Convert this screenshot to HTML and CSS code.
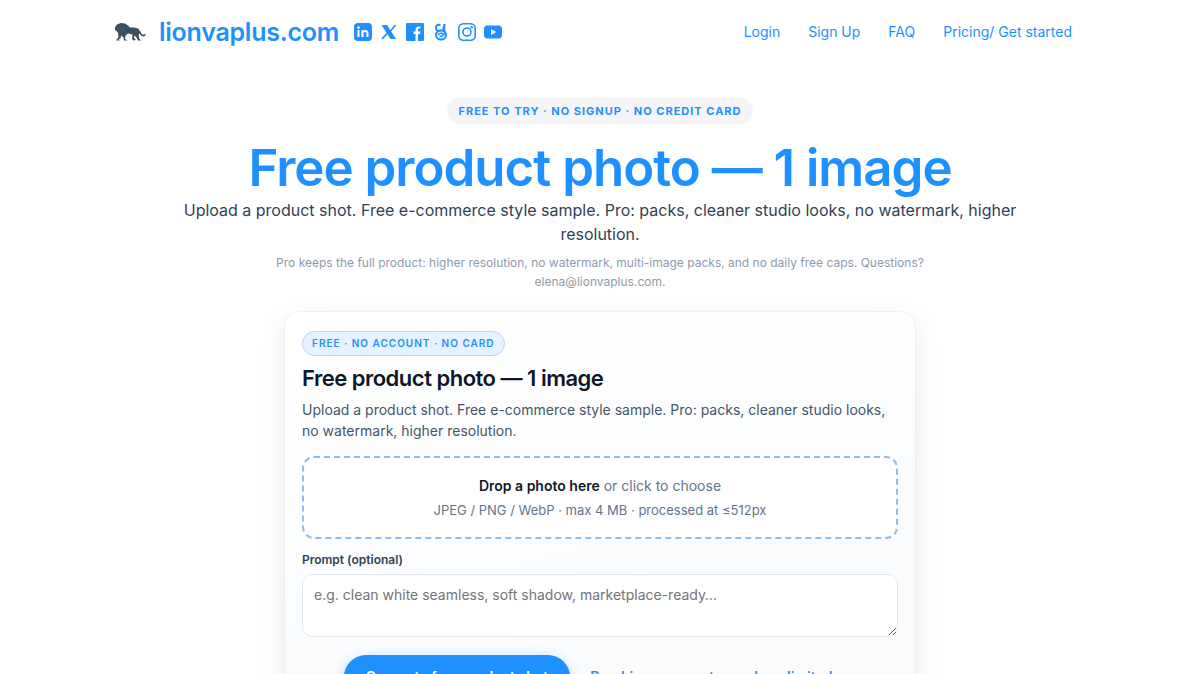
FILE: index.html
```html
<!DOCTYPE html>
<html lang="en">
<head>
<meta charset="utf-8">
<meta name="viewport" content="width=device-width, initial-scale=1">
<title>Free product photo — lionvaplus.com</title>
<link rel="stylesheet" href="styles.css">
</head>
<body>
<header class="header">
  <div class="brand">
    <a class="logo" href="#" aria-label="Home">
      <svg viewBox="0 0 32 22" width="32" height="22" fill="#3d5060"><path d="M1 7 2 4.500 4 3 7 2 11 2.500 14 4.500 16 6.500 20 6.500 24 7.500 26 10 28 13.500 30.500 13.500 31 12.500 31.800 14 30 15.500 27.500 15 25.500 12.500 24.500 14 25.500 18 27 19.500 24 19.500 22.500 16.500 20.500 14.500 20 17 22 19 19.500 19.500 18 18 18.500 13.500 14 12.500 11.500 14.500 11 18 13.500 19.500 10 19.500 9.500 16.500 7 14.500 6.500 17.500 4.500 18.500 6 19.500 2 19.500 4.500 16 4 12 2.500 10 1 9Z"/></svg>
    </a>
    <a class="brand-name" href="#">lionvaplus.com</a>
    <nav class="social" aria-label="Social">
      <a href="#" aria-label="LinkedIn"><svg viewBox="0 0 18 18"><rect width="18" height="18" rx="4"/><g fill="#fff"><circle cx="4.500" cy="4.600" r="1.300"/><path d="M3.500 7h2v7h-2zM7.500 7h2v1c1-1.600 5-1.500 5 2v4h-2v-3.500c0-2-3-2-3 0V14h-2z"/></g></svg></a>
      <a href="#" aria-label="X"><svg viewBox="0 0 18 18"><path d="M1.500 2h5.500l9 14h-5.500z"/><path d="M15.500 2 10.500 8M7.500 10 2 16" fill="none" stroke="currentColor" stroke-width="1.700"/></svg></a>
      <a href="#" aria-label="Facebook"><svg viewBox="0 0 18 18"><rect width="18" height="18" rx="1"/><path fill="#fff" d="M9.500 18v-7H7.500V8.500h2V7c0-3 1.500-4 5-3.500v2c-2-.2-2.500.2-2.500 1.500v1.500h2.500L14 11h-2v7z"/></svg></a>
      <a href="#" aria-label="Threads"><svg viewBox="0 0 18 18" fill="none" stroke="currentColor" stroke-width="2"><path d="M8.500 2C5 1 3.500 3 4 5.500c.5 2.500 3 3 5 1.500M12.500 1 11 8"/><ellipse cx="9" cy="12" rx="5" ry="4.500"/><path d="M6 12c1.500-3 6-2 5 .5-.5 1.500-3 1-3 0M12.500 1v11" stroke-width="1.500"/></svg></a>
      <a href="#" aria-label="Instagram"><svg viewBox="0 0 18 18" fill="none" stroke="currentColor" stroke-width="1.600"><rect x=".8" y=".8" width="16.400" height="16.400" rx="4.500"/><circle cx="9" cy="9" r="4"/><circle cx="13.700" cy="4.300" r=".5"/></svg></a>
      <a href="#" aria-label="YouTube"><svg viewBox="0 0 18 18"><rect y="2.500" width="18" height="13" rx="3.500"/><path fill="#fff" d="m7 6 5 3-5 3z"/></svg></a>
    </nav>
  </div>
  <nav class="menu" aria-label="Main">
    <a href="#">Login</a><a href="#">Sign Up</a><a href="#">FAQ</a><a href="#">Pricing/ Get started</a>
  </nav>
</header>
<main class="main">
  <section class="hero">
    <p class="eyebrow">Free to try · No signup · No credit card</p>
    <h1 class="title">Free product photo — 1 image</h1>
    <p class="lead">Upload a product shot. Free e-commerce style sample. Pro: packs, cleaner studio looks, no watermark, higher resolution.</p>
    <p class="note">Pro keeps the full product: higher resolution, no watermark, multi-image packs, and no daily free caps. Questions? elena@lionvaplus.com.</p>
  </section>
  <form class="card">
    <span class="badge">Free · No account · No card</span>
    <h2 class="card-title">Free product photo — 1 image</h2>
    <p class="card-text">Upload a product shot. Free e-commerce style sample. Pro: packs, cleaner studio looks, no watermark, higher resolution.</p>
    <button class="drop" type="button">
      <span class="drop-main"><strong>Drop a photo here</strong> or click to choose</span>
      <span class="drop-info">JPEG / PNG / WebP · max 4 MB · processed at ≤512px</span>
    </button>
    <label class="label" for="prompt">Prompt (optional)</label>
    <textarea class="prompt" id="prompt" placeholder="e.g. clean white seamless, soft shadow, marketplace-ready…"></textarea>
    <div class="actions">
      <button class="submit" type="button">Generate free product shot</button>
      <a class="pro-link" href="#">Pro: hi-res, no watermark, unlimited</a>
    </div>
  </form>
</main>
</body>
</html>
```
FILE: styles.css
```css
* { box-sizing: border-box; }
body { margin: 0; background: #fff; color: #334155; font-family: Inter, "Liberation Sans", sans-serif; font-size: 16px; }
h1, h2, p { margin: 0; }
a { color: #1e90ff; text-decoration: none; }
.header { display: flex; align-items: center; justify-content: space-between; max-width: 1000px; height: 64px; margin: 0 auto; padding: 0 28px 0 14px; }
.brand { display: flex; align-items: center; }
.logo { display: flex; margin-right: 13px; }
.brand-name { font-size: 25px; font-weight: 600; line-height: 32px; letter-spacing: -0.01em; }
.social { display: flex; gap: 8px; margin-left: 15px; }
.social a { display: flex; }
.social svg { width: 18px; height: 18px; }
.social svg:not([fill]) { fill: currentColor; }
.menu { display: flex; gap: 28px; font-size: 14px; line-height: 24px; }
.main { padding: 34px 24px 0; }
.hero { display: flex; flex-direction: column; align-items: center; max-width: 860px; margin: 0 auto; text-align: center; }
.eyebrow { padding: 5px 11px; border-radius: 20px; background: #f5f5f7; color: #1e90ff; font-size: 11px; font-weight: 700; line-height: 16px; letter-spacing: 1px; text-transform: uppercase; }
.title { margin-top: 16px; color: #1e90ff; font-size: 51px; font-weight: 600; line-height: 56px; letter-spacing: -1px; }
.lead { margin-top: 2px; font-size: 16px; line-height: 24px; }
.note { max-width: 720px; margin-top: 7px; color: #8f9bab; font-size: 12px; line-height: 19px; }
.card { display: flex; flex-direction: column; align-items: stretch; max-width: 632px; margin: 20px auto 32px; padding: 19px 17px; border: 1px solid #edf1f5; border-radius: 16px; background: linear-gradient(165deg, #fff, #f8fafc); box-shadow: 0 8px 32px rgba(15, 23, 42, .08); }
.badge { align-self: flex-start; padding: 4px 9px; border: 1px solid #b5d7fa; border-radius: 20px; background: #e5f2ff; color: #1e90ff; font-size: 10px; font-weight: 600; line-height: 15px; letter-spacing: 1px; text-transform: uppercase; }
.card-title { margin-top: 7px; color: #0f172a; font-size: 22px; font-weight: 600; line-height: 30px; letter-spacing: -.5px; }
.card-text { margin-top: 6px; color: #475569; font-size: 14px; line-height: 21px; }
.drop { display: flex; flex-direction: column; align-items: center; gap: 4px; margin-top: 15px; padding: 17px; border: 2px dashed #90bde8; border-radius: 12px; background: #fff; color: #64748b; font-family: inherit; }
.drop-main { font-size: 14px; line-height: 22px; }
.drop-main strong { color: #0f172a; font-weight: 600; }
.drop-info { font-size: 13px; line-height: 19px; }
.label { margin-top: 12px; font-size: 12px; font-weight: 600; line-height: 18px; }
.prompt { width: 100%; height: 63px; margin-top: 5px; padding: 9px 11px; border: 1px solid #e2e8f0; border-radius: 10px; background: #fff; font-family: inherit; font-size: 14px; line-height: 22px; resize: vertical; }
.prompt::placeholder { color: #757575; }
.actions { display: flex; align-items: center; justify-content: center; gap: 20px; margin-top: 18px; padding-right: 24px; }
.submit { padding: 12px 22px; border: 0; border-radius: 24px; background: #1e90ff; box-shadow: 0 4px 14px rgba(30, 144, 255, .3); color: #fff; font-family: inherit; font-size: 14px; font-weight: 600; line-height: 20px; }
.pro-link { font-size: 14px; font-weight: 600; line-height: 20px; }
```
